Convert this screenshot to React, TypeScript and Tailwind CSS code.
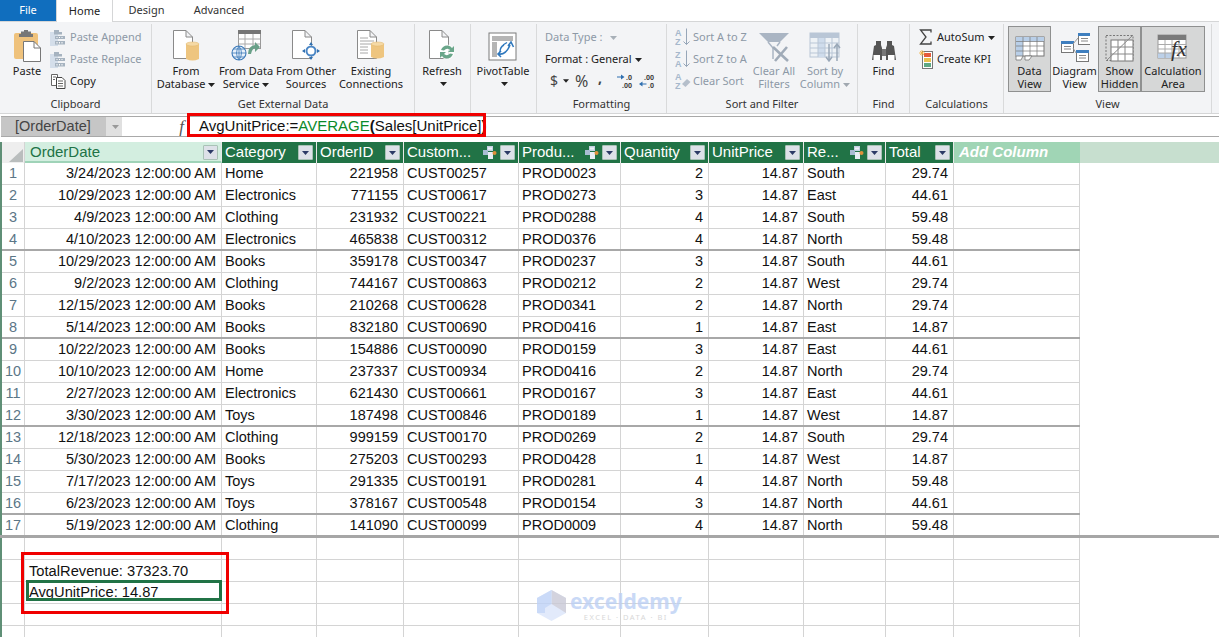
import React from "react";

const ribbonFont = "font-['Noto_Sans',sans-serif]";
const gridFont = "font-['Liberation_Sans',Arial,sans-serif]";

const Doc = ({ x = 0, y = 0, w = 24, h = 32, fill = "#fff", stroke = "#8a8a8a" }: { x?: number; y?: number; w?: number; h?: number; fill?: string; stroke?: string }) => (
  <path d={`M${x + 0.5} ${y + 0.5}H${x + w - 7}L${x + w - 0.5} ${y + 7}V${y + h - 0.5}H${x + 0.5}Z M${x + w - 7} ${y + 0.5}V${y + 7}H${x + w - 0.5}`} fill={fill} stroke={stroke} />
);
const Cyl = ({ x, y, w = 12, h = 15 }: { x: number; y: number; w?: number; h?: number }) => (
  <g>
    <path d={`M${x} ${y + 2}V${y + h - 2}Q${x + w / 2} ${y + h + 1} ${x + w} ${y + h - 2}V${y + 2}Z`} fill="#eec57f" />
    <ellipse cx={x + w / 2} cy={y + 2} rx={w / 2} ry={2} fill="#f5d9a5" stroke="#e0b468" strokeWidth="0.5" />
  </g>
);
const I = ({ w = 32, h = 34, children, className = "" }: { w?: number; h?: number; children: React.ReactNode; className?: string }) => (
  <svg width={w} height={h} viewBox={`0 0 ${w} ${h}`} className={`shrink-0 ${className}`}>{children}</svg>
);
const Caret = ({ c = "#222" }: { c?: string }) => (
  <svg width="7" height="4" viewBox="0 0 7 4" className="inline-block ml-[3px] align-middle"><path d="M0 0H7L3.5 4Z" fill={c} /></svg>
);

const PasteIcon = () => (
  <I w={28} h={32}>
    <rect x="1" y="3" width="24" height="26" rx="2" fill="#efc27c" />
    <path d="M8 4V1.500H11V0H15V1.500H18V4H20V7H6V4Z" fill="#777" />
    <path d="M10.500 11.500H21L27.500 18V31.500H10.500Z" fill="#fff" stroke="#777" />
    <path d="M21 11.500V18H27.500" fill="none" stroke="#777" />
  </I>
);
const SmallClip = () => (
  <I w={16} h={17}>
    <rect x="0" y="3" width="8" height="14" fill="#d4deea" />
    <path d="M4 3V1H9V3H12V5.500H4Z" fill="#a6b3c0" />
    <path d="M5 7H15V10H5ZM5 12H15V15.500H5Z" fill="#a6b3c0" />
    <path d="M7 13V14.500M9.500 13V14.500M12 13V14.500M7 8V9M9.500 8V9M12 8V9" stroke="#fff" />
  </I>
);
const CopyIcon = () => (
  <I w={16} h={16}>
    <path d="M1.500 1.500H7.500V12.500H1.500Z" fill="#fff" stroke="#666" />
    <path d="M6.500 4.500H12L15 7.500V15.500H6.500Z" fill="#fff" stroke="#444" />
    <path d="M8 8H13M8 10.500H13M8 13H13M3 4H6M3 6.500H5" stroke="#666" />
  </I>
);
const FromDb = () => (
  <I w={28} h={32}>
    <Doc x={1} y={0} w={20} h={29} />
    <Cyl x={14} y={12} w={13} h={19} />
  </I>
);
const DataService = () => (
  <I w={34} h={32}>
    <rect x="9.500" y="0.500" width="22" height="18" fill="#fff" stroke="#999" />
    <rect x="9" y="0" width="23" height="4" fill="#777" />
    <path d="M9.500 9H31M9.500 14H31M16 4V18M24 4V18" stroke="#aaa" />
    <circle cx="10" cy="23" r="7" fill="#e8f1fb" stroke="#3a78b8" strokeWidth="1.100" />
    <path d="M3 23H17M10 16V30M5 19H15M5 27H15M10 16Q5 23 10 30M10 16Q15 23 10 30" stroke="#3a78b8" strokeWidth="0.800" fill="none" />
    <path d="M19 24Q19 16 26 15V12L31 17L26 22V18Q23 19 22 24Z" fill="#69a088" />
  </I>
);
const OtherSources = () => (
  <I w={30} h={32}>
    <Doc x={1} y={0} w={20} h={29} />
    <circle cx="20" cy="21" r="4.500" fill="#fff" stroke="#4a86c5" strokeWidth="2" />
    <path d="M20 12L22 15H18ZM20 30L22 27H18ZM11 21L14 19V23ZM29 21L26 19V23Z" fill="#2f6fb0" />
  </I>
);
const Existing = () => (
  <I w={30} h={32}>
    <Doc x={1} y={0} w={20} h={29} />
    <path d="M4 8H12M4 11H18M4 14H18M4 17H12M4 20H12M4 23H12" stroke="#a8a8a8" />
    <Cyl x={15} y={12} w={13} h={17} />
  </I>
);
const RefreshIcon = () => (
  <I w={28} h={32}>
    <Doc x={1} y={0} w={20} h={29} />
    <circle cx="19" cy="22" r="7.500" fill="#fff" opacity="0.800" />
    <path d="M13 20Q15 15 20 15.500Q23 16 24 18L26 16V22H20L22 20Q19 17.500 16 20.500ZM25 24Q23 29 18 28.500Q15 28 14 26L12 28V22H18L16 24Q19 26.500 22 23.500Z" fill="#6aa68a" />
  </I>
);
const PivotIcon = () => (
  <I w={30} h={30}>
    <rect x="1" y="1" width="27" height="27" fill="#fff" stroke="#7b7b7b" />
    <rect x="4" y="4" width="21" height="5" fill="#b5b5b5" />
    <rect x="4" y="10" width="5" height="15" fill="#b5b5b5" />
    <path d="M11 22Q18 23 22 13M20 14L23 10L25.500 15M13 19L10 22L13 25" stroke="#2f78bd" strokeWidth="1.600" fill="none" />
    <path d="M15 13L19 10.500M12 20Q12 15 16 13" stroke="#2f78bd" strokeWidth="1.400" fill="none" />
  </I>
);
const SortIcon = ({ top, bottom }: { top: string; bottom: string }) => (
  <svg width="16" height="18" viewBox="0 0 16 18" className="shrink-0 -mr-[2px]">
    <text x="0" y="8" fontSize="9" fontWeight="700" fill="#a6b8cc" fontFamily="Liberation Sans">{top}</text>
    <text x="0" y="17" fontSize="9" fontWeight="700" fill="#a6b8cc" fontFamily="Liberation Sans">{bottom}</text>
    <path d="M11.500 0.500V16.500M8.500 13.500L11.500 16.500L14.500 13.500" stroke="#96a6b8" fill="none" />
  </svg>
);
const ClearSort = () => (
  <svg width="16" height="18" viewBox="0 0 16 18" className="shrink-0 -mr-[2px]">
    <text x="0" y="8" fontSize="9" fontWeight="700" fill="#a6b8cc" fontFamily="Liberation Sans">A</text>
    <text x="0" y="17" fontSize="9" fontWeight="700" fill="#a6b8cc" fontFamily="Liberation Sans">Z</text>
    <path d="M7 12L12 7L15.500 10L10.500 15Z" fill="#b5bfcb" />
  </svg>
);
const ClearFilter = () => (
  <I w={32} h={30}>
    <path d="M1 1H31L22 10H10Z" fill="#aab5c3" />
    <path d="M10 10L15 16V27M22 10L19 14" stroke="#aab5c3" strokeWidth="1.500" fill="none" />
    <path d="M15 15L30 29M29 15L17 29" stroke="#a0abb8" strokeWidth="2.600" />
  </I>
);
const SortCol = () => (
  <I w={32} h={30}>
    <rect x="1" y="1" width="29" height="24" fill="#eef2f6" stroke="#b9c6d6" />
    <rect x="1" y="1" width="29" height="5" fill="#b9c6d6" />
    <rect x="9" y="6" width="7" height="19" fill="#cfdcec" />
    <path d="M1 11H30M1 16H30M1 21H30M9 6V25M16 6V25M23 6V25" stroke="#b9c6d6" />
    <path d="M20 12V29M17 25L20 29L23 25" stroke="#9aa8b8" strokeWidth="1.500" fill="none" />
    <path d="M28 29V12M25 16L28 12L31 16" stroke="#9aa8b8" strokeWidth="1.500" fill="none" />
  </I>
);
const Binoculars = () => (
  <I w={26} h={24}>
    <path d="M1 22L3 8L5 7V3H10V7L11 10V22ZM15 22V10L16 7V3H21V7L23 8L25 22Z" fill="#555" />
    <path d="M11 11H15V18H11Z" fill="#777" />
    <path d="M2.500 22V17H9V22ZM17 22V17H23.500V22Z" fill="#fff" />
  </I>
);
const KpiIcon = () => (
  <I w={14} h={19}>
    <rect x="3.500" y="1.500" width="10" height="17" fill="#fff" stroke="#777" />
    <rect x="5" y="3" width="7" height="4" fill="#e55b3b" />
    <rect x="5" y="8" width="7" height="4" fill="#e9c04d" />
    <rect x="5" y="13" width="7" height="4" fill="#5ea884" />
    <path d="M3 0V6M0 3H6M1 1L5 5M5 1L1 5" stroke="#f0b040" strokeWidth="0.800" />
  </I>
);
const SigmaIcon = () => (
  <I w={14} h={16}>
    <path d="M12 3.500V1H1.500L7 8L1.500 15H12V12.500" fill="none" stroke="#444" strokeWidth="1.300" />
  </I>
);
const DataViewIcon = () => (
  <I w={30} h={26}>
    <rect x="1" y="1" width="28" height="19" fill="#fff" stroke="#777" />
    <rect x="1" y="1" width="28" height="4.500" fill="#b9cfe8" />
    <rect x="1" y="1" width="7" height="19" fill="#b9cfe8" />
    <path d="M1 5.500H29M1 10H29M1 15H29M8 1V20M15 1V20M22 1V20" stroke="#777" strokeWidth="0.700" />
    <path d="M1 20H8L6 24H1ZM10 20H17L14 24H10Z" fill="#fff" stroke="#777" strokeWidth="0.800" />
  </I>
);
const Tbl = ({ x, y }: { x: number; y: number }) => (
  <g>
    <rect x={x + 0.5} y={y + 0.5} width="12" height="11" fill="#fff" stroke="#777" />
    <rect x={x} y={y} width="13" height="3" fill="#3f7fbf" />
    <path d={`M${x + 3} ${y + 5.5}H${x + 10}M${x + 3} ${y + 8}H${x + 10}`} stroke="#888" />
  </g>
);
const DiagramIcon = () => (
  <I w={30} h={30}>
    <Tbl x={1} y={9} />
    <Tbl x={18} y={1} />
    <Tbl x={16} y={18} />
    <path d="M13 12L18 6M13 16L16 21" stroke="#999" />
  </I>
);
const HiddenIcon = () => (
  <I w={30} h={28}>
    <rect x="1" y="1.500" width="27" height="25" fill="none" stroke="#777" strokeDasharray="2 1.500" />
    <rect x="6" y="6" width="22" height="21" fill="#fff" stroke="#777" />
    <path d="M6 13H28M6 20H28M13 6V27M20 6V27" stroke="#888" />
    <path d="M1 27L28 1" stroke="#888" />
  </I>
);
const CalcIcon = () => (
  <svg width="32" height="28" viewBox="0 0 32 28" className="shrink-0">
    <rect x="1" y="1" width="28" height="23" fill="#fff" stroke="#999" />
    <rect x="1" y="1" width="28" height="5" fill="#7a7a7a" />
    <rect x="1" y="19" width="14" height="5" fill="#bcd0e8" />
    <path d="M1 10.500H29M1 15H29M1 19H29M8 6V24M15 6V24M22 6V24" stroke="#aaa" />
    <text x="14" y="22" fontSize="22" fontStyle="italic" fontFamily="Liberation Serif" fill="#333">fx</text>
  </svg>
);
const FilterBtn = () => (
  <span className="w-[15px] h-[15px] shrink-0 flex items-center justify-center bg-[#dde1e8] rounded-[1px] border border-[#a9c2b6]">
    <svg width="7" height="4" viewBox="0 0 7 4"><path d="M0 0H7L3.500 4Z" fill="#2c3a66" /></svg>
  </span>
);
const FieldIcon = () => (
  <svg width="14" height="14" viewBox="0 0 14 14" className="shrink-0">
    <rect x="4" y="0" width="6" height="5" fill="#c5d2e2" />
    <rect x="5" y="1.500" width="4" height="2" fill="#eef2f7" />
    <rect x="0" y="4" width="5" height="5" fill="#a9bcd2" />
    <rect x="5" y="6" width="5" height="7" fill="#e8edf3" />
    <circle cx="11.500" cy="7" r="2" fill="#e0903a" />
  </svg>
);

const Big = ({ w, icon, lines, caret, disabled, active, caretLine }: { w: number; icon: React.ReactNode; lines: string[]; caret?: boolean; disabled?: boolean; active?: boolean; caretLine?: boolean }) => (
  <div style={{ width: w }} className={`flex flex-col items-center h-[66px] shrink-0 ${active ? "bg-[#d6d7d7] border border-[#8f9090]" : "border border-transparent"} ${disabled ? "text-[#8d99a6]" : "text-[#222]"}`}>
    <div className="h-[37px] flex items-end justify-center pb-[2px]">{icon}</div>
    <div className="text-[11px] leading-[13px] text-center whitespace-nowrap">
      {lines.map((l, i) => (
        <div key={i}>{l}{caret && i === lines.length - 1 && <Caret c={disabled ? "#a0a8b0" : "#222"} />}</div>
      ))}
      {caretLine && <div className="h-[13px] flex items-center justify-center"><Caret /></div>}
    </div>
  </div>
);
const Small = ({ icon, label, disabled, caret }: { icon?: React.ReactNode; label: string; disabled?: boolean; caret?: boolean }) => (
  <div className={`h-[22px] flex items-center gap-[4px] whitespace-nowrap text-[11px] ${disabled ? "text-[#8d99a6]" : "text-[#222]"}`}>
    {icon}<span>{label}</span>{caret && <span className={disabled ? "" : "-ml-[4px]"}><Caret c={disabled ? "#a8b0b8" : "#222"} /></span>}
  </div>
);
const Group = ({ w, label, children, className = "" }: { w: number; label: string; children: React.ReactNode; className?: string }) => (
  <div style={{ width: w }} className="shrink-0 h-full flex flex-col border-r border-[#d9dadb]">
    <div className={`h-[73px] pt-[2px] flex ${className}`}>{children}</div>
    <div className="text-[11px] leading-[14px] text-center text-[#333]">{label}</div>
  </div>
);

const Ribbon = () => (
  <div className={`h-[93px] bg-[#f3f4f6] border-b border-t border-[#d5d6d7] flex pt-[2px] ${ribbonFont}`}>
    <Group w={152} label="Clipboard" className="pl-[11px] gap-[7px]">
      <div className="flex flex-col items-center w-[32px] pt-[4px]">
        <PasteIcon />
        <div className="text-[11px] leading-[13px] mt-[2px] text-[#222]">Paste</div>
      </div>
      <div className="flex flex-col">
        <Small icon={<SmallClip />} label="Paste Append" disabled />
        <Small icon={<SmallClip />} label="Paste Replace" disabled />
        <Small icon={<CopyIcon />} label="Copy" />
      </div>
    </Group>
    <Group w={263} label="Get External Data" className="pl-[4px]">
      <Big w={60} icon={<FromDb />} lines={["From", "Database"]} caret />
      <Big w={60} icon={<DataService />} lines={["From Data", "Service"]} caret />
      <Big w={60} icon={<OtherSources />} lines={["From Other", "Sources"]} />
      <Big w={70} icon={<Existing />} lines={["Existing", "Connections"]} />
    </Group>
    <Group w={56} label="" className="pl-[1px]">
      <Big w={52} icon={<RefreshIcon />} lines={["Refresh"]} caretLine />
    </Group>
    <Group w={66} label="" className="pl-[2px]">
      <Big w={60} icon={<PivotIcon />} lines={["PivotTable"]} caretLine />
    </Group>
    <Group w={130} label="Formatting" className="pl-[8px]">
      <div className="flex flex-col">
        <Small label="Data Type :" disabled caret />
        <Small label="Format : General" caret />
        <div className="h-[22px] flex items-center pl-[5px] text-[#444]">
          <span className="text-[14px] leading-none w-[8px]">$</span>
          <span className="ml-[2px] w-[9px] flex"><Caret /></span>
          <span className="ml-[6px] text-[16px] leading-none w-[13px]">%</span>
          <span className="ml-[10px] text-[14px] font-bold leading-none w-[6px] -translate-y-[3px]">,</span>
          <svg width="17" height="17" viewBox="0 0 17 17" className="ml-[13px]"><path d="M0 3.500H4V1.500L7.500 4L4 6.500V4.500H0Z" fill="#2f6fb0" /><text x="9" y="7" fontSize="7" fill="#444" fontWeight="700">.0</text><text x="5" y="15" fontSize="7" fill="#444" fontWeight="700">.00</text></svg>
          <svg width="17" height="17" viewBox="0 0 17 17" className="ml-[5px]"><text x="5" y="7" fontSize="7" fill="#444" fontWeight="700">.00</text><path d="M7.500 10.500H3.500V8.500L0 11L3.500 13.500V11.500H7.500Z" fill="#2f6fb0" /><text x="9" y="15" fontSize="7" fill="#444" fontWeight="700">.0</text></svg>
        </div>
      </div>
    </Group>
    <Group w={191} label="Sort and Filter" className="pl-[8px]">
      <div className="flex flex-col w-[75px]">
        <Small icon={<SortIcon top="A" bottom="Z" />} label="Sort A to Z" disabled />
        <Small icon={<SortIcon top="Z" bottom="A" />} label="Sort Z to A" disabled />
        <Small icon={<ClearSort />} label="Clear Sort" disabled />
      </div>
      <Big w={48} icon={<ClearFilter />} lines={["Clear All", "Filters"]} disabled />
      <Big w={54} icon={<SortCol />} lines={["Sort by", "Column"]} caret disabled />
    </Group>
    <Group w={52} label="Find" className="justify-center">
      <Big w={44} icon={<Binoculars />} lines={["Find"]} />
    </Group>
    <Group w={94} label="Calculations" className="pl-[9px]">
      <div className="flex flex-col">
        <Small icon={<SigmaIcon />} label="AutoSum" caret />
        <Small icon={<KpiIcon />} label="Create KPI" />
      </div>
    </Group>
    <Group w={208} label="View" className="pl-[4px]">
      <Big w={43} icon={<DataViewIcon />} lines={["Data", "View"]} active />
      <Big w={47} icon={<DiagramIcon />} lines={["Diagram", "View"]} />
      <Big w={43} icon={<HiddenIcon />} lines={["Show", "Hidden"]} active />
      <Big w={64} icon={<CalcIcon />} lines={["Calculation", "Area"]} active />
    </Group>
  </div>
);

const columns = [
  { name: "OrderDate", w: 197, right: true },
  { name: "Category", w: 95 },
  { name: "OrderID", w: 87, right: true },
  { name: "Custom...", w: 115, field: true },
  { name: "Produ...", w: 102, field: true },
  { name: "Quantity", w: 88, right: true },
  { name: "UnitPrice", w: 95, right: true },
  { name: "Re...", w: 82, field: true },
  { name: "Total", w: 68, right: true },
];
const rows: (string | number)[][] = [
  ["3/24/2023 12:00:00 AM", "Home", 221958, "CUST00257", "PROD0023", 2, "14.87", "South", "29.74"],
  ["10/29/2023 12:00:00 AM", "Electronics", 771155, "CUST00617", "PROD0273", 3, "14.87", "East", "44.61"],
  ["4/9/2023 12:00:00 AM", "Clothing", 231932, "CUST00221", "PROD0288", 4, "14.87", "South", "59.48"],
  ["4/10/2023 12:00:00 AM", "Electronics", 465838, "CUST00312", "PROD0376", 4, "14.87", "North", "59.48"],
  ["10/29/2023 12:00:00 AM", "Books", 359178, "CUST00347", "PROD0237", 3, "14.87", "South", "44.61"],
  ["9/2/2023 12:00:00 AM", "Clothing", 744167, "CUST00863", "PROD0212", 2, "14.87", "West", "29.74"],
  ["12/15/2023 12:00:00 AM", "Books", 210268, "CUST00628", "PROD0341", 2, "14.87", "North", "29.74"],
  ["5/14/2023 12:00:00 AM", "Books", 832180, "CUST00690", "PROD0416", 1, "14.87", "East", "14.87"],
  ["10/22/2023 12:00:00 AM", "Books", 154886, "CUST00090", "PROD0159", 3, "14.87", "East", "44.61"],
  ["10/10/2023 12:00:00 AM", "Home", 237337, "CUST00934", "PROD0416", 2, "14.87", "North", "29.74"],
  ["2/27/2023 12:00:00 AM", "Electronics", 621430, "CUST00661", "PROD0167", 3, "14.87", "East", "44.61"],
  ["3/30/2023 12:00:00 AM", "Toys", 187498, "CUST00846", "PROD0189", 1, "14.87", "West", "14.87"],
  ["12/18/2023 12:00:00 AM", "Clothing", 999159, "CUST00170", "PROD0269", 2, "14.87", "South", "29.74"],
  ["5/30/2023 12:00:00 AM", "Books", 275203, "CUST00293", "PROD0428", 1, "14.87", "West", "14.87"],
  ["7/17/2023 12:00:00 AM", "Toys", 291335, "CUST00191", "PROD0281", 4, "14.87", "North", "59.48"],
  ["6/23/2023 12:00:00 AM", "Toys", 378167, "CUST00548", "PROD0154", 3, "14.87", "North", "44.61"],
  ["5/19/2023 12:00:00 AM", "Clothing", 141090, "CUST00099", "PROD0009", 4, "14.87", "North", "59.48"],
];

const Cell = ({ w, children, right, className = "" }: { w: number; children?: React.ReactNode; right?: boolean; className?: string }) => (
  <div style={{ width: w }} className={`shrink-0 h-full border-r border-[#d4d4d4] px-[3px] pt-[1px] flex items-center overflow-hidden whitespace-nowrap ${right ? "justify-end pr-[5px]" : ""} ${className}`}>
    {children}
  </div>
);

export default function App() {
  return (
    <div className={`relative w-[1219px] h-[637px] overflow-hidden bg-white text-[#111] ${gridFont}`}>
      {/* tabs */}
      <div className={`h-[21px] flex text-[11px] ${ribbonFont}`}>
        <div className="w-[56px] bg-[#106ebe] text-white flex items-center justify-center">File</div>
        <div className="w-[57px] h-[22px] bg-white border-x border-[#d5d6d7] flex items-center justify-center z-10 text-[#222]">Home</div>
        <div className="w-[67px] flex items-center justify-center text-[#333]">Design</div>
        <div className="w-[78px] flex items-center justify-center text-[#333]">Advanced</div>
      </div>
      <Ribbon />
      {/* formula bar */}
      <div className="h-[2px] bg-white" />
      <div className="h-[21px] flex items-stretch border-y border-[#a9a9a9] ml-[1px] text-[15px]">
        <div className="w-[105px] bg-[#c6c6c6] text-[#444] flex items-center pl-[14px] text-[14.5px]">[OrderDate]</div>
        <div className="w-[16px] bg-[#e0e0e0] flex items-center justify-center"><Caret c="#999" /></div>
        <div className="w-[62px] flex items-center justify-end font-['Liberation_Serif',serif] italic text-[#555] text-[17px]">f</div>
        <div className="w-[15px]" />
        <div className="flex items-center whitespace-nowrap">AvgUnitPrice:=<span className="text-[#0a8a2a]">AVERAGE</span><b>(</b>Sales[UnitPrice]<b>)</b></div>
      </div>
      <div className="h-[5px] bg-white" />
      {/* grid */}
      <div className="border-l-2 border-[#5f8f76] h-[502px] text-[14.5px] flex flex-col">
        <div className="h-[21px] flex shrink-0 text-[15px]">
          <div className="w-[23px] shrink-0 h-full bg-[#eeeeee] border-r border-[#d4d4d4] flex items-end justify-end">
            <svg width="16" height="14" viewBox="0 0 16 14"><path d="M15 0V13H1Z" fill="#b9bdbd" /></svg>
          </div>
          {columns.map((c, i) => (
            <div key={c.name} style={{ width: c.w }} className={`shrink-0 h-full border-r border-[#e8e8e8] flex items-center pl-[3px] pr-[3px] gap-[3px] overflow-hidden whitespace-nowrap ${i === 0 ? "bg-[#d3eee0] text-[#217346] border-b-2 border-b-[#9fd3b8] pl-[5px] pt-[1px]" : "bg-[#217346] text-white"}`}>
              <span className="flex-1">{c.name}</span>
              {c.field && <FieldIcon />}
              <FilterBtn />
            </div>
          ))}
          <div className="w-[126px] shrink-0 bg-[#a0d5b5] text-white font-bold italic flex items-center pl-[5px] whitespace-nowrap">Add Column</div>
          <div className="flex-1 bg-[#c7dfcf]" />
        </div>
        {rows.map((r, i) => {
          const last = i === rows.length - 1;
          const pageEnd = (i + 1) % 4 === 0;
          return (
            <div key={i} className={`flex w-[1078px] shrink-0 ${last ? "h-[20px]" : "h-[22px]"} ${last ? "" : pageEnd ? "border-b-2 border-[#a8a8a8]" : "border-b border-[#d4d4d4]"}`}>
              <div className="w-[23px] shrink-0 h-full border-r border-[#d4d4d4] pt-[1px] flex items-center justify-center text-[#5b7687]">{i + 1}</div>
              {columns.map((c, j) => (
                <Cell key={j} w={c.w} right={c.right}>{r[j]}</Cell>
              ))}
              <Cell w={126} />
            </div>
          );
        })}
        <div className="h-[3px] bg-[#a6a6a6] shrink-0 -ml-[2px] w-[1221px]" />
        {[0, 1, 2, 3, 4].map((k) => (
          <div key={k} className={`flex w-[1078px] shrink-0 h-[22px] ${k < 4 ? "border-b border-[#d4d4d4]" : ""}`}>
            <div className="w-[23px] shrink-0 h-full border-r border-[#d4d4d4]" />
            {columns.map((c, j) => (
              <Cell key={j} w={c.w} className="relative overflow-visible text-[14.7px]">
                {j === 0 && k === 1 && <span className="pl-[1px]">TotalRevenue: 37323.70</span>}
                {j === 0 && k === 2 && <span className="pl-[1px] -translate-y-[1px]">AvgUnitPrice: 14.87</span>}
              </Cell>
            ))}
            <Cell w={126} />
          </div>
        ))}
      </div>
      {/* selected measure cell */}
      <div className="absolute left-[26px] top-[580px] w-[196px] h-[21px] border-[3px] border-[#217346]" />
      {/* annotation boxes */}
      <div className="absolute left-[187px] top-[113px] w-[299px] h-[24px] border-[3px] border-[#f00000]" />
      <div className="absolute left-[21px] top-[552px] w-[208px] h-[62px] border-[3px] border-[#f00000]" />
      {/* watermark */}
      <div className="absolute left-[537px] top-[590px] flex items-start gap-[4px] opacity-80 pointer-events-none">
        <svg width="29" height="31" viewBox="0 0 29 31">
          <path d="M14.500 0L29 8V23L14.500 31L0 23V8Z" fill="#dbe6fb" />
          <path d="M14.500 0L29 8V23L14.500 14Z" fill="#c9c9d6" />
          <path d="M0 8L14.500 0V14L8 18V23L0 23Z" fill="#bed2f7" />
        </svg>
        <div className="flex flex-col items-center">
          <span className="text-[#bcd0f5] font-bold text-[21px] leading-[22px] font-['Noto_Sans',sans-serif]">exceldemy</span>
          <span className="text-[#cfcfcf] text-[7.5px] leading-[9px] tracking-[1.500px] mt-[1px] font-['Noto_Sans',sans-serif]">EXCEL · DATA · BI</span>
        </div>
      </div>
    </div>
  );
}
